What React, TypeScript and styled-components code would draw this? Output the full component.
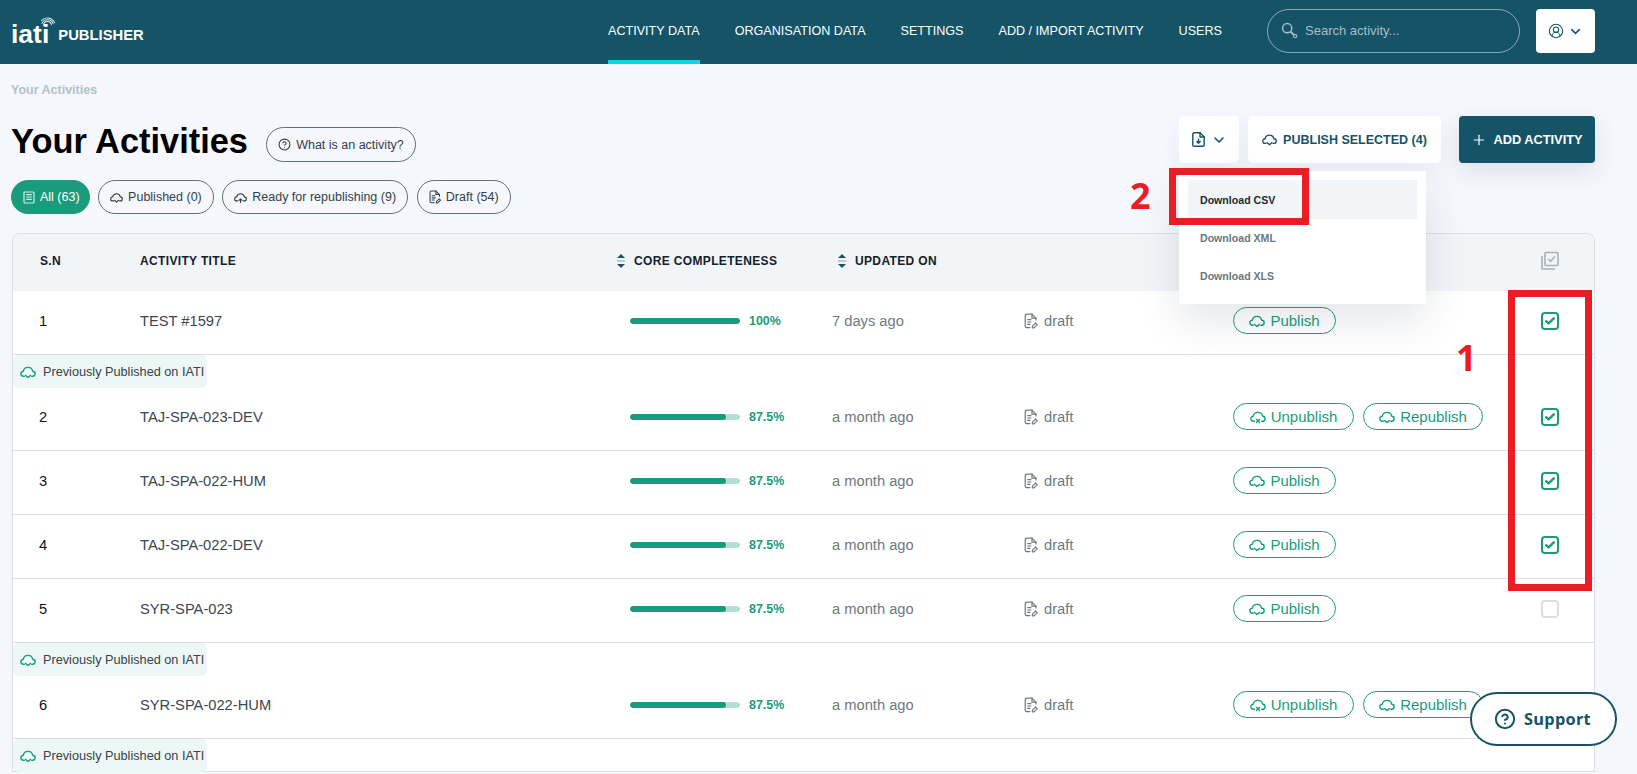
import React from "react";
import styled, { createGlobalStyle } from "styled-components";
import { ChevronDown, CircleHelp, CircleUserRound, Plus } from "lucide-react";

const teal = "#155366";
const green = "#1a9c7c";

const GlobalStyle = createGlobalStyle`
  html, body {
    margin: 0;
    height: 100%;
    overflow: hidden;
    background: #f5f7fd;
    font-family: "Liberation Sans", Arial, sans-serif;
  }
  * { box-sizing: border-box; }
`;

const Page = styled.div`
  position: relative;
  width: 1637px;
  height: 774px;
  overflow: hidden;
`;

const Header = styled.header`
  height: 64px;
  background: ${teal};
  display: flex;
  align-items: center;
  padding: 0 42px 0 11px;
`;

const Logo = styled.div`
  position: relative;
  display: flex;
  align-items: center;
  gap: 9px;
  color: #fff;
  font-weight: 700;
  margin-top: 3px;
`;

const LogoMark = styled.span`
  font-size: 26.5px;
  line-height: 26px;
`;

const LogoName = styled.span`
  font-size: 14.8px;
  margin-top: 2px;
`;

const LogoArcs = styled.svg`
  position: absolute;
  left: 29px;
  top: -7px;
`;

const Nav = styled.nav`
  display: flex;
  align-items: stretch;
  height: 64px;
  gap: 35px;
  margin-left: auto;
  transform: translateX(-1px);
`;

const NavItem = styled.a<{ $active?: boolean }>`
  display: flex;
  align-items: center;
  color: #fff;
  font-size: 12.6px;
  padding-bottom: 2px;
  border-bottom: 4px solid ${(p) => (p.$active ? "#10d5e0" : "transparent")};
  border-top: 4px solid transparent;
`;

const Search = styled.div`
  width: 253px;
  height: 44px;
  margin: 0 0 2px 44px;
  border: 1px solid rgba(255, 255, 255, 0.5);
  border-radius: 22px;
  display: flex;
  align-items: center;
  gap: 7px;
  padding: 0 0 2px 13px;
  color: #a9bec5;
  font-size: 13px;
`;

const UserButton = styled.button`
  width: 59px;
  height: 44px;
  margin: 0 0 2px 16px;
  border: 0;
  border-radius: 4px;
  background: #fff;
  color: ${teal};
  display: flex;
  align-items: center;
  justify-content: center;
  gap: 4px;
  padding: 0;
`;

const Main = styled.main`
  padding: 0 42px 0 11px;
`;

const Breadcrumb = styled.div`
  height: 52px;
  padding-top: 19px;
  font-size: 12.5px;
  font-weight: 700;
  color: #b3c1c8;
`;

const TopRow = styled.div`
  display: flex;
  align-items: flex-start;
  height: 47px;
`;

const Title = styled.h1`
  margin: 2px 0 0;
  font-size: 34.4px;
  line-height: 47px;
  font-weight: 700;
  color: #000;
`;

const HelpPill = styled.a`
  height: 35px;
  width: 150px;
  margin: 11px 0 0 18px;
  border: 1px solid #5d7078;
  border-radius: 18px;
  display: flex;
  align-items: center;
  justify-content: center;
  gap: 5px;
  font-size: 12.5px;
  color: #333f48;
`;

const Actions = styled.div`
  position: relative;
  margin-left: auto;
  display: flex;
  gap: 9px;
`;

const GhostButton = styled.button<{ $width: number }>`
  width: ${(p) => p.$width}px;
  height: 47px;
  border: 0;
  border-radius: 5px;
  background: #fff;
  box-shadow: 0 8px 24px rgba(40, 60, 90, 0.05);
  color: ${teal};
  display: flex;
  align-items: center;
  justify-content: center;
  gap: 6px;
  padding: 0;
  font-family: inherit;
  font-size: 12.5px;
  font-weight: 700;
`;

const AddButton = styled.button`
  width: 136px;
  height: 47px;
  margin-left: 9px;
  border: 0;
  border-radius: 4px;
  background: ${teal};
  box-shadow: 0 8px 24px rgba(40, 60, 90, 0.12);
  color: #fff;
  display: flex;
  align-items: center;
  justify-content: center;
  gap: 6px;
  padding: 0;
  font-family: inherit;
  font-size: 12.8px;
  font-weight: 700;
`;

const Dropdown = styled.div`
  position: absolute;
  z-index: 3;
  top: 55px;
  left: 0;
  width: 247px;
  height: 133px;
  padding: 9px;
  background: #fff;
  box-shadow: 0 16px 40px rgba(30, 50, 70, 0.12);
`;

const DropdownItem = styled.div<{ $active?: boolean }>`
  height: ${(p) => (p.$active ? 39 : 38)}px;
  display: flex;
  align-items: center;
  padding-left: 12px;
  background: ${(p) => (p.$active ? "#f1f5f8" : "transparent")};
  color: ${(p) => (p.$active ? "#222b31" : "#69777f")};
  font-size: 10.6px;
  font-weight: 700;
`;

const Filters = styled.div`
  display: flex;
  gap: 8.5px;
  margin-top: 17px;
`;

const Filter = styled.a<{ $active?: boolean }>`
  height: 34px;
  padding: 0 ${(p) => (p.$active ? "9px" : "11px")} 0 11px;
  border: 1px solid ${(p) => (p.$active ? green : "#5d7078")};
  border-radius: 17px;
  background: ${(p) => (p.$active ? green : "transparent")};
  color: ${(p) => (p.$active ? "#fff" : "#333f48")};
  display: flex;
  align-items: center;
  gap: 5px;
  font-size: 12.5px;
`;

const Table = styled.div`
  margin: 19px 0 0 1px;
  border: 1px solid #d9dfe3;
  border-bottom: 0;
  border-radius: 8px 8px 0 0;
  background: #fff;
`;

const columns = "127px 476px 216px 192px 209px 1fr 100px";

const HeadRow = styled.div`
  display: grid;
  grid-template-columns: ${columns};
  align-items: center;
  height: 57px;
  padding-bottom: 3px;
  border-radius: 8px 8px 0 0;
  background: #f1f5f8;
  font-size: 12px;
  font-weight: 700;
  letter-spacing: 0.35px;
  color: #14202a;
`;

const HeadCell = styled.div<{ $indent?: number }>`
  display: flex;
  align-items: center;
  gap: 8px;
  padding-left: ${(p) => p.$indent ?? 0}px;
`;

const BodyRow = styled.div<{ $tagged?: boolean }>`
  position: relative;
  padding-top: ${(p) => (p.$tagged ? 32 : 0)}px;
  border-bottom: 1px solid #d9dfe3;
`;

const RowGrid = styled.div`
  display: grid;
  grid-template-columns: ${columns};
  align-items: center;
  height: 63px;
  padding-bottom: 4px;
  font-size: 14.7px;
  color: #3a4650;
`;

const Tag = styled.div`
  position: absolute;
  top: 0;
  left: 0;
  width: 194px;
  height: 33px;
  padding-left: 7px;
  border-radius: 6px;
  background: #edf7f5;
  display: flex;
  align-items: center;
  gap: 7px;
  font-size: 12.7px;
  white-space: nowrap;
  color: #36424b;
`;

const Index = styled.div`
  padding-left: 26px;
  color: #111;
`;

const Progress = styled.div`
  display: flex;
  align-items: center;
  gap: 9px;
  padding-left: 14px;
`;

const Track = styled.div`
  width: 110px;
  height: 6px;
  border-radius: 3px;
  background: #b5dfd5;
  overflow: hidden;
`;

const Fill = styled.div`
  height: 100%;
  border-radius: 3px;
  background: ${green};
`;

const Percent = styled.span`
  color: ${green};
  font-size: 12.4px;
  font-weight: 700;
`;

const Muted = styled.div`
  display: flex;
  align-items: center;
  gap: 6px;
  color: #6d7a83;
`;

const ActionCell = styled.div`
  display: flex;
  gap: 9px;
`;

const RowButton = styled.a<{ $width: number }>`
  width: ${(p) => p.$width}px;
  height: 27px;
  border: 1px solid ${green};
  border-radius: 14px;
  display: flex;
  align-items: center;
  justify-content: center;
  gap: 5px;
  color: ${green};
  font-size: 15px;
`;

const CheckCell = styled.div`
  display: flex;
  justify-content: flex-end;
  padding-right: 35px;
`;

const Check = styled.span<{ $on?: boolean }>`
  width: 18px;
  height: 18px;
  border: 2px solid ${(p) => (p.$on ? green : "#d9dfe3")};
  border-radius: 4px;
  display: flex;
  align-items: center;
  justify-content: center;
`;

const Highlight = styled.div`
  position: absolute;
  z-index: 4;
  border: 7px solid #ec1c24;
  pointer-events: none;
`;

const RowsHighlight = styled(Highlight)`
  left: 1508px;
  top: 290px;
  width: 84px;
  height: 301px;
`;

const CsvHighlight = styled(Highlight)`
  left: 1169px;
  top: 168px;
  width: 140px;
  height: 57px;
`;

const Callout = styled.div`
  position: absolute;
  z-index: 4;
  color: #ec1c24;
  font-family: "Open Sans", sans-serif;
  font-size: 36px;
  font-weight: 700;
  line-height: 36px;
`;

const CalloutOne = styled(Callout)`
  left: 1456px;
  top: 340px;
`;

const CalloutTwo = styled(Callout)`
  left: 1130px;
  top: 178px;
`;

const Support = styled.button`
  position: fixed;
  z-index: 5;
  left: 1470px;
  top: 692px;
  width: 147px;
  height: 54px;
  border: 2px solid ${teal};
  border-radius: 27px;
  background: #fff;
  color: ${teal};
  display: flex;
  align-items: center;
  justify-content: center;
  gap: 8px;
  padding: 0 2px 0 0;
  font-family: "Open Sans", sans-serif;
  font-size: 16.3px;
  font-weight: 700;
  letter-spacing: 0.3px;
`;

const Cloud = ({ kind = "check", size = 16, color = "currentColor" }: { kind?: "check" | "x" | "up"; size?: number; color?: string }) => (
  <svg width={size} height={size} viewBox="0 0 16 16" fill="none" stroke={color} strokeWidth="1.4" strokeLinecap="round" strokeLinejoin="round">
    <path d="M4.3 12.2H3.4A2.5 2.5 0 0 1 3.3 7.2 A4.8 4.8 0 0 1 12.7 7.2 A2.5 2.5 0 0 1 12.6 12.2H11.7" />
    {kind === "check" && <path d="M5.6 11.4 8 13.6 10.4 11.4" />}
    {kind === "x" && <path d="M6.4 10.2 9.6 13.4M9.6 10.2 6.4 13.4" />}
    {kind === "up" && <path d="M8 14V10M6 11.6 8 9.6 10 11.6" />}
  </svg>
);

const DraftIcon = ({ color = "#6d7a83", size = 16 }: { color?: string; size?: number }) => (
  <svg width={(size * 14) / 16} height={size} viewBox="0 0 14 16" fill="none" stroke={color} strokeWidth="1.2" strokeLinecap="round" strokeLinejoin="round">
    <path d="M6 14.6H2.6A1.4 1.4 0 0 1 1.2 13.2V2.6A1.4 1.4 0 0 1 2.6 1.2H8L12 5.2V7" />
    <path d="M8 1.2V5.2H12M3.6 6.6H7M3.6 9H7M3.6 11.4H6" />
    <path d="M8.4 14.8V13.2L11.6 10 13.2 11.6 10 14.8Z" />
  </svg>
);

const FileDownload = () => (
  <svg width="13" height="15" viewBox="0 0 13 15" fill="none" stroke={teal} strokeWidth="1.4" strokeLinecap="round" strokeLinejoin="round">
    <path d="M2 .8H8L12.2 5V13A1.2 1.2 0 0 1 11 14.2H2A1.2 1.2 0 0 1 .8 13V2A1.2 1.2 0 0 1 2 .8Z" />
    <path d="M8 .8V5H12.2M6.5 7V11M4.8 9.6 6.5 11.2 8.2 9.6" />
  </svg>
);

const SearchIcon = () => (
  <svg width="17" height="17" viewBox="0 0 17 17" fill="none" stroke="#a9bec5" strokeWidth="1.5">
    <circle cx="6.2" cy="6.2" r="4.6" />
    <path d="M9.6 9.6 13 13" strokeWidth="2" />
    <circle cx="14.2" cy="14.2" r="1.6" strokeWidth="1.1" />
  </svg>
);

const SortIcon = () => (
  <svg width="10" height="14" viewBox="0 0 10 14">
    <path d="M5 0 9 4H1Z" fill={teal} />
    <path d="M1 7H9" stroke="#8aa3ad" strokeWidth="1" />
    <path d="M5 14 1 10H9Z" fill={teal} />
  </svg>
);

const TickIcon = () => (
  <svg width="10" height="8" viewBox="0 0 10 8" fill="none" stroke={green} strokeWidth="2.4" strokeLinecap="round" strokeLinejoin="round">
    <path d="M1.2 4.2 3.6 6.4 8.8 1.4" />
  </svg>
);

const AllIcon = () => (
  <svg width="12" height="13" viewBox="0 0 12 13" fill="none" stroke="#cfeee6" strokeWidth="1.2">
    <rect x="1" y="1" width="10" height="11" rx="1" />
    <path d="M3.2 3.6H8.8M3.2 6H8.8M3.2 8.4H8.8" />
  </svg>
);

const SelectAllIcon = () => (
  <svg width="20" height="20" viewBox="0 0 20 20" fill="none" stroke="#a8b2b8" strokeWidth="1.6" strokeLinejoin="round">
    <path d="M3 5V18H16" />
    <rect x="6" y="1.5" width="13" height="13" rx="1" />
    <path d="M9.2 8 11.6 10.4 15.8 5.4" />
  </svg>
);

type Item = { title: string; percent: number; updated: string; previous?: boolean; checked?: boolean };

const rows: Item[] = [
  { title: "TEST #1597", percent: 100, updated: "7 days ago", checked: true },
  { title: "TAJ-SPA-023-DEV", percent: 87.5, updated: "a month ago", previous: true, checked: true },
  { title: "TAJ-SPA-022-HUM", percent: 87.5, updated: "a month ago", checked: true },
  { title: "TAJ-SPA-022-DEV", percent: 87.5, updated: "a month ago", checked: true },
  { title: "SYR-SPA-023", percent: 87.5, updated: "a month ago" },
  { title: "SYR-SPA-022-HUM", percent: 87.5, updated: "a month ago", previous: true },
];

const PreviousTag = () => (
  <Tag>
    <Cloud color={green} />
    Previously Published on IATI
  </Tag>
);

const App = () => {
  return (
    <Page>
      <GlobalStyle />
      <Header>
        <Logo>
          <LogoMark>iati</LogoMark>
          <LogoArcs width="18" height="18" viewBox="0 0 18 18" fill="none" stroke="#fff" strokeWidth="1.1" strokeLinecap="round">
            <path d="M3.6 11A4 4 0 0 1 11.4 10.4" opacity="0.9" />
            <path d="M2 9.4A6 6 0 0 1 13 9.4" opacity="0.85" />
            <path d="M1.6 6.4A8 8 0 0 1 14.6 8.8" opacity="0.75" />
          </LogoArcs>
          <LogoName>PUBLISHER</LogoName>
        </Logo>
        <Nav>
          <NavItem $active>ACTIVITY DATA</NavItem>
          <NavItem>ORGANISATION DATA</NavItem>
          <NavItem>SETTINGS</NavItem>
          <NavItem>ADD / IMPORT ACTIVITY</NavItem>
          <NavItem>USERS</NavItem>
        </Nav>
        <Search>
          <SearchIcon />
          Search activity...
        </Search>
        <UserButton>
          <CircleUserRound size={16} strokeWidth={1.6} />
          <ChevronDown size={15} strokeWidth={2.4} />
        </UserButton>
      </Header>
      <Main>
        <Breadcrumb>Your Activities</Breadcrumb>
        <TopRow>
          <Title>Your Activities</Title>
          <HelpPill>
            <CircleHelp size={13} strokeWidth={2} />
            What is an activity?
          </HelpPill>
          <Actions>
            <GhostButton $width={60}>
              <FileDownload />
              <ChevronDown size={16} strokeWidth={2.4} />
            </GhostButton>
            <GhostButton $width={193}>
              <Cloud kind="check" size={15} />
              PUBLISH SELECTED (4)
            </GhostButton>
            <AddButton>
              <Plus size={16} strokeWidth={1.8} />
              ADD ACTIVITY
            </AddButton>
            <Dropdown>
              <DropdownItem $active>Download CSV</DropdownItem>
              <DropdownItem>Download XML</DropdownItem>
              <DropdownItem>Download XLS</DropdownItem>
            </Dropdown>
          </Actions>
        </TopRow>
        <Filters>
          <Filter $active>
            <AllIcon />
            All (63)
          </Filter>
          <Filter>
            <Cloud size={13} />
            Published (0)
          </Filter>
          <Filter>
            <Cloud kind="up" size={13} />
            Ready for republishing (9)
          </Filter>
          <Filter>
            <DraftIcon color="#333f48" size={14} />
            Draft (54)
          </Filter>
        </Filters>
        <Table>
          <HeadRow>
            <HeadCell $indent={27}>S.N</HeadCell>
            <HeadCell>ACTIVITY TITLE</HeadCell>
            <HeadCell>
              <SortIcon />
              CORE COMPLETENESS
            </HeadCell>
            <HeadCell $indent={5}>
              <SortIcon />
              UPDATED ON
            </HeadCell>
            <HeadCell />
            <HeadCell />
            <CheckCell>
              <SelectAllIcon />
            </CheckCell>
          </HeadRow>
          {rows.map((row, i) => (
            <BodyRow key={row.title} $tagged={row.previous}>
              {row.previous && <PreviousTag />}
              <RowGrid>
                <Index>{i + 1}</Index>
                <div>{row.title}</div>
                <Progress>
                  <Track>
                    <Fill style={{ width: `${row.percent === 100 ? 100 : 87}%` }} />
                  </Track>
                  <Percent>{row.percent}%</Percent>
                </Progress>
                <Muted>{row.updated}</Muted>
                <Muted>
                  <DraftIcon />
                  draft
                </Muted>
                <ActionCell>
                  {row.previous ? (
                    <>
                      <RowButton $width={121}>
                        <Cloud kind="x" />
                        Unpublish
                      </RowButton>
                      <RowButton $width={120}>
                        <Cloud />
                        Republish
                      </RowButton>
                    </>
                  ) : (
                    <RowButton $width={103}>
                      <Cloud />
                      Publish
                    </RowButton>
                  )}
                </ActionCell>
                <CheckCell>
                  <Check $on={row.checked}>{row.checked && <TickIcon />}</Check>
                </CheckCell>
              </RowGrid>
            </BodyRow>
          ))}
          <BodyRow $tagged>
            <PreviousTag />
          </BodyRow>
        </Table>
      </Main>
      <RowsHighlight />
      <CsvHighlight />
      <CalloutOne>1</CalloutOne>
      <CalloutTwo>2</CalloutTwo>
      <Support>
        <CircleHelp size={22} strokeWidth={2.2} />
        Support
      </Support>
    </Page>
  );
};

export default App;
